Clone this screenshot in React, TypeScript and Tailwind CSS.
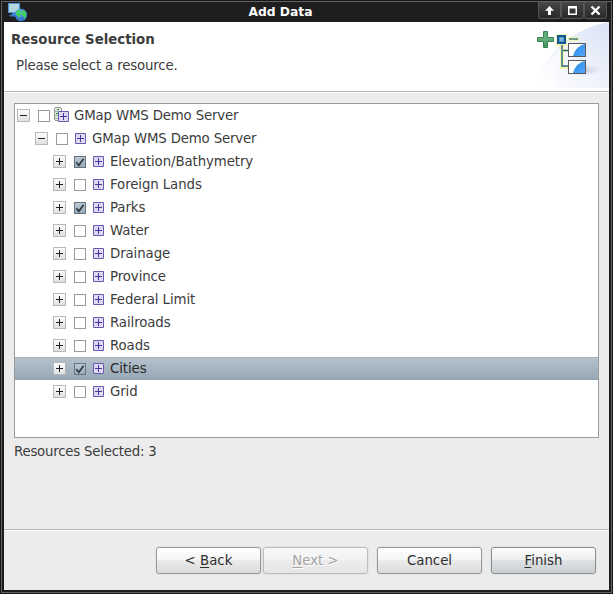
import React from "react";

const rows = [
  { label: "GMap WMS Demo Server", depth: 0, open: true, checked: false },
  { label: "GMap WMS Demo Server", depth: 1, open: true, checked: false },
  { label: "Elevation/Bathymetry", depth: 2, open: false, checked: true },
  { label: "Foreign Lands", depth: 2, open: false, checked: false },
  { label: "Parks", depth: 2, open: false, checked: true },
  { label: "Water", depth: 2, open: false, checked: false },
  { label: "Drainage", depth: 2, open: false, checked: false },
  { label: "Province", depth: 2, open: false, checked: false },
  { label: "Federal Limit", depth: 2, open: false, checked: false },
  { label: "Railroads", depth: 2, open: false, checked: false },
  { label: "Roads", depth: 2, open: false, checked: false },
  { label: "Cities", depth: 2, open: false, checked: true, selected: true },
  { label: "Grid", depth: 2, open: false, checked: false },
];

const indents = ["pl-[2px]", "pl-[20px]", "pl-[38px]"];

function Expander({ open }: { open: boolean }) {
  return (
    <svg className="mt-[5px] h-[13px] w-[13px] shrink-0" viewBox="0 0 13 13" shapeRendering="crispEdges">
      <defs>
        <linearGradient id="exp" x1="0" y1="0" x2="0" y2="1">
          <stop offset="0" stopColor="#ffffff" />
          <stop offset="1" stopColor="#dedede" />
        </linearGradient>
      </defs>
      <rect x=".5" y=".5" width="12" height="12" fill="url(#exp)" stroke="#b8b8b8" />
      <rect x="3" y="6" width="7" height="1" fill="#222" />
      {!open && <rect x="6" y="3" width="1" height="7" fill="#222" />}
    </svg>
  );
}

function CheckBox({ checked }: { checked: boolean }) {
  return (
    <svg className="mt-[6px] h-[12px] w-[12px] shrink-0" viewBox="0 0 12 12">
      <defs>
        <linearGradient id="chk" x1="0" y1="0" x2="0" y2="1">
          <stop offset="0" stopColor="#bccad5" />
          <stop offset="1" stopColor="#98a9b8" />
        </linearGradient>
      </defs>
      <rect x=".5" y=".5" width="11" height="11" fill={checked ? "url(#chk)" : "#fff"} stroke={checked ? "#647482" : "#9b9b9b"} />
      {checked && <path d="M2.3 6.3 4.8 9.3 9.6 2.8" fill="none" stroke="#34393e" strokeWidth="1.7" />}
    </svg>
  );
}

function LayerGlyph() {
  return (
    <g shapeRendering="crispEdges">
      <rect x="1" y="1" width="9" height="9" fill="#dedaf4" />
      <path d="M1 0h9v1H1zM1 10h9v1H1zM0 1h1v9H0zM10 1h1v9h-1z" fill="#6a58b0" />
      <path d="M5 2h1v7H5zM2 5h7v1H2z" fill="#4b329b" />
      <path d="M0 0h1v1H0zM10 0h1v1h-1zM0 10h1v1H0zM10 10h1v1h-1z" fill="#8c80c3" />
    </g>
  );
}

function LayerIcon() {
  return (
    <svg className="mt-[6px] h-[11px] w-[11px] shrink-0" viewBox="0 0 11 11">
      <LayerGlyph />
    </svg>
  );
}

function ServerIcon() {
  return (
    <svg className="mt-[3px] h-[15px] w-[16px] shrink-0" viewBox="0 0 16 15">
      <g shapeRendering="crispEdges">
        <path d="M0 1h1V0h6v1h1v12H7v1H1v-1H0z" fill="#92998f" />
        <path d="M1 1h6v12H1z" fill="#e0eddc" />
        <path d="M1 4h6v1H1zM1 8h6v1H1z" fill="#a3b09f" />
        <path d="M3 2h2v1H3zM2 6h2v1H2z" fill="#28843c" />
        <path d="M1 11h3v1H1z" fill="#a8bba4" />
      </g>
      <g transform="translate(4 4)"><LayerGlyph /></g>
    </svg>
  );
}

function AppIcon() {
  return (
    <svg className="ml-[6px] mt-[1px] h-[19px] w-[20px]" viewBox="0 0 20 19">
      <defs>
        <linearGradient id="screen" x1="0" y1="0" x2="1" y2="1">
          <stop offset="0" stopColor="#b9dcd5" />
          <stop offset="1" stopColor="#a9d4e6" />
        </linearGradient>
        <radialGradient id="globe" cx=".4" cy=".3">
          <stop offset="0" stopColor="#79b5f0" />
          <stop offset="1" stopColor="#3a76c8" />
        </radialGradient>
      </defs>
      <path d="M.5.5h11v9H.5z" fill="url(#screen)" stroke="#4f94dd" strokeWidth="1.2" />
      <path d="M4 10h4v2H4zM1 11.8h7v1.7H2z" fill="#3b7fc9" />
      <circle cx="13" cy="12" r="6.2" fill="url(#globe)" />
      <path d="M8 9.2 11 6.8l2 .4-.8 2 1.4 1.3-1.8 2.3-.4 2.7-1.6-2.8-1.7-1zM14 8l2-.8 2.3 2.6-.3 3.4-1.5 2.5-1.3-2.6-1.5-1.3z" fill="#3ed45b" />
    </svg>
  );
}

function WizardBanner() {
  return (
    <svg className="h-[66px] w-[76px]" viewBox="0 0 76 66">
      <defs>
        <linearGradient id="sweep" x1=".1" y1="1" x2="1" y2=".1">
          <stop offset="0" stopColor="#fff" />
          <stop offset=".55" stopColor="#edf1fb" />
          <stop offset="1" stopColor="#dde4f6" />
        </linearGradient>
        <linearGradient id="plus" x1="0" y1="0" x2="0" y2="1">
          <stop offset="0" stopColor="#5fae7d" />
          <stop offset=".5" stopColor="#65ad78" />
          <stop offset="1" stopColor="#3f9258" />
        </linearGradient>
        <linearGradient id="map" x1="0" y1="0" x2="1" y2="1">
          <stop offset="0" stopColor="#258ce8" />
          <stop offset="1" stopColor="#57a8fa" />
        </linearGradient>
        <radialGradient id="shade">
          <stop offset="0" stopColor="#9a9fb2" stopOpacity=".6" />
          <stop offset="1" stopColor="#bcc1d0" stopOpacity="0" />
        </radialGradient>
      </defs>
      <path d="M2 66C10 32 38 7 76 0V66z" fill="url(#sweep)" />
      <path d="M2 66C10 46 24 27 40 17Q25 35 21 66z" fill="#fff" opacity=".35" />
      <ellipse cx="50" cy="48" rx="18" ry="6" fill="url(#shade)" />
      <path d="M10.5 9.5h4v6h6v4h-6v6h-4v-6h-6v-4h6z" fill="url(#plus)" stroke="#378451" />
      <path d="M23 12h11v12h-3v3h6v3h-6v14h6v3H27V24h-4z" fill="#f3f5b4" />
      <path d="M35 15h11v4H35z" fill="#f3f5b4" />
      <path d="M36 16h9v2h-9z" fill="#6e9d85" />
      <path d="M29 23v21h7M30 28.5h6" fill="none" stroke="#296879" strokeWidth="1.4" />
      <rect x="25" y="14" width="7" height="7" fill="#5296c7" stroke="#125992" strokeWidth="2" />
      <rect x="27" y="16" width="3" height="3" fill="#86b6d9" />
      {[21.5, 38.5].map((y) => (
        <g key={y} transform={`translate(35.5 ${y})`}>
          <rect width="17" height="13" fill="#fff" stroke="#5a5a5a" />
          <path d="M5 12.5C6 7 10 2 16.5 1V12.5z" fill="url(#map)" />
          <path d="M5 12.5C6 7 10 2 16.5 1" fill="none" stroke="#3987ce" strokeWidth=".8" strokeDasharray="2 1" />
        </g>
      ))}
    </svg>
  );
}

function WindowButton({ children }: { children: React.ReactNode }) {
  return (
    <div className="flex h-[17px] w-[23px] items-center justify-center rounded-b-[3px] border border-t-0 border-[#555] bg-linear-to-b from-[#474747] to-[#292929]">
      <svg className="h-[11px] w-[11px]" viewBox="0 0 11 11">{children}</svg>
    </div>
  );
}

const normal = "border-[#999] bg-[linear-gradient(#fff,#f5f5f5_48%,#ebebeb_50%,#dadada)] text-[#2f2f2f]";
const disabled = "border-[#bdbdbd] bg-[linear-gradient(#f7f7f7,#f2f2f2_48%,#ededed_50%,#e5e5e5)] text-[#a5a5a5] [text-shadow:1px_1px_#fff]";
const primary = "border-[#8b8f92] bg-[linear-gradient(#fbfbfb,#eceeef_48%,#dee2e4_50%,#c9ced2)] text-[#2f2f2f]";

function Button({ look, children }: { look: string; children: React.ReactNode }) {
  return (
    <button className={`flex h-[27px] w-[105px] items-center justify-center rounded-[3px] border shadow-[0_0_0_1px_#e2e2e2] ${look}`}>
      <span className="whitespace-pre">{children}</span>
    </button>
  );
}

function Mnemonic({ children }: { children: string }) {
  return <span className="underline decoration-1 underline-offset-2">{children}</span>;
}

export default function App() {
  return (
    <div className="h-[594px] w-[613px] bg-[#161616] p-px font-['DejaVu_Sans',sans-serif] text-[13.33px] leading-[16px] text-[#3c3c3c]">
      <div className="flex h-full flex-col border border-[#626262] bg-[#1e1e1e] px-[2px] pb-[2px]">
        <div className="grid h-[20px] shrink-0 grid-cols-[75px_1fr_75px]">
          <div className="-ml-[2px]"><AppIcon /></div>
          <div className="pt-[2px] text-center text-[12.3px] font-bold text-white">
            <span className="-ml-[52px]">Add Data</span>
          </div>
          <div className="flex justify-end pr-[2px]">
            <WindowButton>
              <path d="M5.5 1 10 5.7H7V10H4V5.7H1z" fill="#fff" />
            </WindowButton>
            <WindowButton>
              <path d="M1 1h9v9H1zM2.5 3.5v5h6v-5z" fill="#fff" fillRule="evenodd" />
            </WindowButton>
            <WindowButton>
              <path d="m1.5 1.5 8 8m0-8-8 8" stroke="#fff" strokeWidth="2.3" />
            </WindowButton>
          </div>
        </div>

        <div className="flex min-h-0 flex-1 flex-col bg-[#ececec]">
          <div className="flex h-[70px] shrink-0 justify-between border-b border-[#b9b9b9] bg-white">
            <div className="pl-[7px] pt-[10px]">
              <div className="font-bold">Resource Selection</div>
              <div className="pl-[5px] pt-[10px] tracking-[-0.16px]">Please select a resource.</div>
            </div>
            <WizardBanner />
          </div>
          <div className="h-px shrink-0 bg-white" />

          <div className="ml-[10px] mt-[10px] h-[335px] w-[585px] shrink-0 border border-[#9a9a9a] bg-white">
            {rows.map((row, i) => (
              <div
                key={i}
                className={`flex h-[23px] ${indents[row.depth]} ${row.selected ? "bg-linear-to-b from-[#b6c3ce] to-[#97a7b5] text-[#2b2b2b] shadow-[inset_0_1px_#a3b1bd,inset_0_-1px_#92a2b1]" : ""}`}
              >
                <Expander open={row.open} />
                <div className="ml-[8px]"><CheckBox checked={row.checked} /></div>
                <div className={row.depth === 0 ? "ml-[4px] w-[20px]" : "ml-[7px] w-[17px]"}>
                  {row.depth === 0 ? <ServerIcon /> : <LayerIcon />}
                </div>
                <span className={`pt-[4px] ${row.depth === 2 ? "tracking-[-0.1px]" : "tracking-[-0.16px]"}`}>{row.label}</span>
              </div>
            ))}
          </div>
          <div className="ml-[10px] mt-[6px] tracking-[-0.23px]">Resources Selected: 3</div>

          <div className="mt-auto flex h-[61px] shrink-0 justify-end border-t border-[#b9b9b9] pr-[13px] pt-[17px] shadow-[inset_0_1px_#fff]">
            <div className="flex gap-[9px]">
              <div className="flex gap-[2px]">
                <Button look={normal}>{"< "}<Mnemonic>B</Mnemonic>ack</Button>
                <Button look={disabled}><Mnemonic>N</Mnemonic>{"ext >"}</Button>
              </div>
              <Button look={normal}>Cancel</Button>
              <Button look={primary}><Mnemonic>F</Mnemonic>inish</Button>
            </div>
          </div>
        </div>
      </div>
    </div>
  );
}
